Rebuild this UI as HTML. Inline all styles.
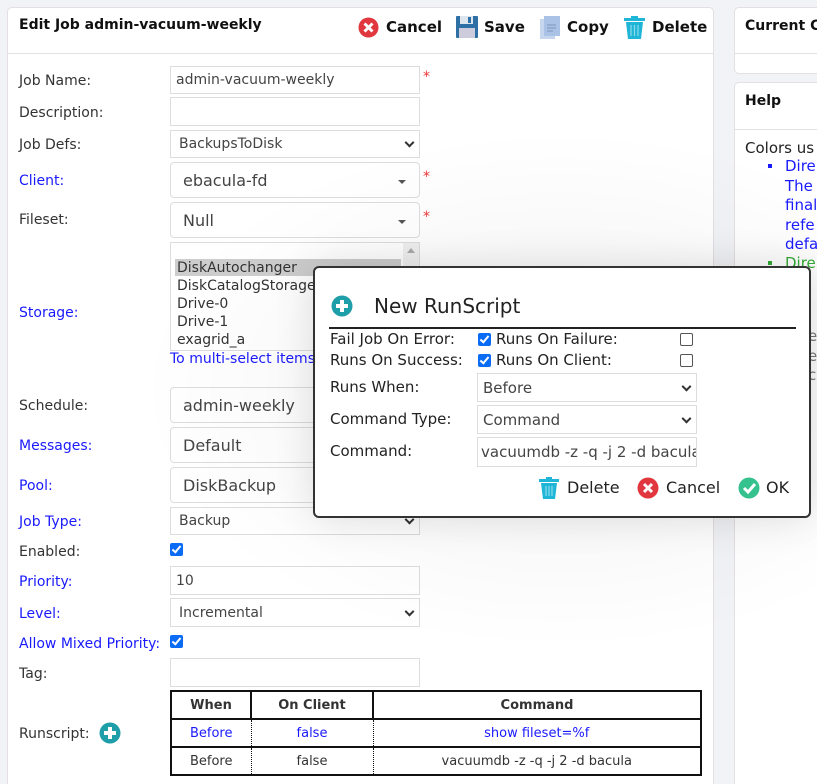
<!DOCTYPE html>
<html style="overflow:hidden"><head><meta charset="utf-8"><style>
*{box-sizing:border-box}
body{margin:0;width:817px;height:784px;background:#f2f3f6;font-family:"DejaVu Sans",Verdana,sans-serif;font-size:14px;color:#333;position:relative;overflow:hidden}
.a{position:absolute}
.panel{position:absolute;background:#fff;border:1px solid #e3dfe2;border-radius:5px}
.lbl{position:absolute;left:19px;font-size:14px;color:#333;white-space:nowrap}
.blue{color:#1a1aff}
.inp{position:absolute;left:170px;width:250px;border:1px solid #ddd;background:#fff;font-size:14px;padding-left:5px;display:flex;align-items:center;color:#444}
.rnd{border-radius:4px;font-size:16px;padding-left:12px}
.chev{position:absolute;right:6px;top:50%;width:7px;height:7px;border-right:2px solid #333;border-bottom:2px solid #333;transform:translateY(-70%) rotate(45deg)}
.tri{position:absolute;right:13px;top:50%;border:4px solid transparent;border-top:4px solid #555;border-bottom:0}
.star{position:absolute;left:423px;color:#e33;font-size:14px}
.cb{position:absolute;width:13px;height:13px;border-radius:2px;background:#0a6cf5}
.cb:after{content:"";position:absolute;left:4px;top:1px;width:3px;height:7px;border-right:2px solid #fff;border-bottom:2px solid #fff;transform:rotate(40deg)}
.ecb{position:absolute;width:13px;height:13px;border:1px solid #555;border-radius:2px;background:#fff}
table{border-collapse:collapse;font-size:13px}
td,th{text-align:center;height:28px;padding:0}
</style></head><body>

<div class="panel" style="left:7px;top:7px;width:707px;height:790px">
 <div class="a" style="left:0;top:45px;width:705px;border-top:1px solid #e3dfe2"></div>
</div>
<div class="a" style="left:19px;top:17px;font-weight:bold;font-size:14px;color:#111">Edit Job admin-vacuum-weekly</div>

<svg class="a" style="left:358px;top:17px" width="21" height="21"><circle cx="10.5" cy="10.5" r="10" fill="#e0383e"/><path d="M6.5 6.5l8 8M14.5 6.5l-8 8" stroke="#fff" stroke-width="3"/></svg>
<div class="a" style="left:386px;top:18px;font-weight:bold;font-size:15px;color:#111">Cancel</div>
<svg class="a" style="left:456px;top:16px" width="22" height="22"><rect x="0" y="0" width="22" height="22" rx="1" fill="#2e6fa6"/><rect x="4" y="0" width="13" height="8" fill="#dde6ee"/><rect x="12" y="1" width="3" height="6" fill="#2e6fa6"/><rect x="3" y="12" width="16" height="10" fill="#ccd"/></svg>
<div class="a" style="left:484px;top:18px;font-weight:bold;font-size:15px;color:#111">Save</div>
<svg class="a" style="left:540px;top:16px" width="20" height="23"><rect x="0" y="3" width="15" height="20" fill="#c5d6ee"/><rect x="4" y="0" width="16" height="20" fill="#a9c2e6"/><path d="M7 9h9M7 12h9M7 15h6" stroke="#7f95b5"/></svg>
<div class="a" style="left:567px;top:18px;font-weight:bold;font-size:15px;color:#111">Copy</div>
<svg class="a" style="left:624px;top:16px" width="21" height="23"><rect x="0" y="2" width="21" height="3" fill="#1fb5d6"/><rect x="7" y="0" width="7" height="3" fill="#1fb5d6"/><path d="M2 6h17l-2 17H4z" fill="#1fb5d6"/><path d="M7 9v11M10.5 9v11M14 9v11" stroke="#8ddced" stroke-width="1.2"/></svg>
<div class="a" style="left:652px;top:18px;font-weight:bold;font-size:15px;color:#111">Delete</div>

<div class="lbl" style="top:73px">Job Name:</div>
<div class="inp" style="top:66px;height:28px">admin-vacuum-weekly</div><div class="star" style="top:69px">*</div>
<div class="lbl" style="top:105px">Description:</div>
<div class="inp" style="top:97px;height:29px"></div>
<div class="lbl" style="top:137px">Job Defs:</div>
<div class="inp" style="top:130px;height:28px;padding-left:8px">BackupsToDisk<span class="chev"></span></div>
<div class="lbl blue" style="top:173px">Client:</div>
<div class="inp rnd" style="top:162px;height:36px">ebacula-fd<span class="tri"></span></div><div class="star" style="top:169px">*</div>
<div class="lbl" style="top:212px">Fileset:</div>
<div class="inp rnd" style="top:202px;height:36px">Null<span class="tri"></span></div><div class="star" style="top:209px">*</div>
<div class="lbl blue" style="top:305px">Storage:</div>
<div class="inp" style="top:242px;height:109px;display:block;padding:0;color:#333">
 <div class="a" style="right:0;top:0;width:16px;height:107px;background:#f0f0f0"></div>
 <div class="a" style="right:4px;top:5px;border:4px solid transparent;border-bottom:5px solid #aaa;border-top:0"></div>
 <div class="a" style="left:4px;top:16px;width:226px;height:17px;background:#cdcdcd"></div>
 <div class="a" style="left:6px;top:16px;line-height:18px">DiskAutochanger<br>DiskCatalogStorage<br>Drive-0<br>Drive-1<br>exagrid_a</div>
</div>
<div class="a blue" style="left:170px;top:351px">To multi-select items</div>
<div class="lbl" style="top:398px">Schedule:</div>
<div class="inp rnd" style="top:387px;height:36px">admin-weekly</div>
<div class="lbl blue" style="top:438px">Messages:</div>
<div class="inp rnd" style="top:427px;height:36px">Default</div>
<div class="lbl blue" style="top:478px">Pool:</div>
<div class="inp rnd" style="top:467px;height:36px">DiskBackup</div>
<div class="lbl blue" style="top:514px">Job Type:</div>
<div class="inp" style="top:507px;height:28px;padding-left:8px">Backup<span class="chev"></span></div>
<div class="lbl" style="top:544px">Enabled:</div>
<div class="cb" style="left:170px;top:543px"></div>
<div class="lbl blue" style="top:574px">Priority:</div>
<div class="inp" style="top:566px;height:29px">10</div>
<div class="lbl blue" style="top:606px">Level:</div>
<div class="inp" style="top:598px;height:29px;padding-left:8px">Incremental<span class="chev"></span></div>
<div class="lbl blue" style="top:636px">Allow Mixed Priority:</div>
<div class="cb" style="left:170px;top:635px"></div>
<div class="lbl" style="top:666px">Tag:</div>
<div class="inp" style="top:658px;height:29px"></div>
<div class="lbl" style="top:726px">Runscript:</div>
<svg class="a" style="left:99px;top:722px" width="22" height="22"><circle cx="11" cy="11" r="10.5" fill="#1e9ea8"/><path d="M11 5v12M5 11h12" stroke="#fff" stroke-width="4"/></svg>

<table class="a" style="left:170px;top:690px;width:532px;border:2px solid #111">
<tr style="border-bottom:2px solid #111"><th style="width:80px;border-right:2px solid #111">When</th><th style="width:122px;border-right:2px solid #111">On Client</th><th>Command</th></tr>
<tr style="border-bottom:2px solid #111;color:#1a1aff"><td style="border-right:1px dotted #111">Before</td><td style="border-right:1px dotted #111">false</td><td>show fileset=%f</td></tr>
<tr><td style="border-right:1px dotted #111">Before</td><td style="border-right:1px dotted #111">false</td><td>vacuumdb -z -q -j 2 -d bacula</td></tr>
</table>

<div class="panel" style="left:734px;top:7px;width:100px;height:67px;overflow:hidden"><div class="a" style="left:0;top:45px;width:100px;border-top:1px solid #e3dfe2"></div></div>
<div class="a" style="left:745px;top:18px;font-weight:bold;color:#111;white-space:nowrap">Current C</div>
<div class="panel" style="left:734px;top:82px;width:100px;height:720px"><div class="a" style="left:0;top:46px;width:100px;border-top:1px solid #e3dfe2"></div></div>
<div class="a" style="left:745px;top:93px;font-weight:bold;color:#111">Help</div>
<div class="a" style="left:745px;top:139px;font-size:15px;color:#222;white-space:nowrap">Colors us</div>
<div class="a" style="left:768px;top:164px;width:4px;height:4px;background:#1a1aff"></div>
<div class="a blue" style="left:785px;top:157px;font-size:15px;line-height:19.5px">Dire<br>The<br>final<br>refe<br>defa</div>
<div class="a" style="left:768px;top:261px;width:4px;height:4px;background:#3a3"></div>
<div class="a" style="left:785px;top:254px;font-size:15px;line-height:19.5px;color:#3a3">Dire<br>c<br>i</div>
<div class="a" style="left:808px;top:327px;font-size:15px;line-height:19.5px;color:#777">e<br>e<br>c</div>

<div class="a" style="left:0;top:0;width:817px;height:784px;background:radial-gradient(ellipse 420px 260px at 560px 390px,rgba(0,0,0,0.06),rgba(0,0,0,0) 100%)"></div>

<div class="a" style="left:313px;top:266px;width:498px;height:252px;background:#fff;border:2px solid #333;border-radius:6px;box-shadow:0 0 40px rgba(0,0,0,0.12);font-size:15px;color:#222">
 <svg class="a" style="left:16px;top:27px" width="22" height="22"><circle cx="11" cy="11" r="10.5" fill="#1e9ea8"/><path d="M11 5v12M5 11h12" stroke="#fff" stroke-width="4"/></svg>
 <div class="a" style="left:59px;top:26px;font-size:20px;color:#222">New RunScript</div>
 <div class="a" style="left:14px;top:59px;width:467px;border-top:2px solid #222"></div>
 <div class="a" style="left:15px;top:62px;white-space:nowrap">Fail Job On Error:</div>
 <div class="cb" style="left:163px;top:65px"></div>
 <div class="a" style="left:181px;top:62px">Runs On Failure:</div>
 <div class="ecb" style="left:365px;top:65px"></div>
 <div class="a" style="left:15px;top:83px;white-space:nowrap">Runs On Success:</div>
 <div class="cb" style="left:163px;top:86px"></div>
 <div class="a" style="left:181px;top:83px">Runs On Client:</div>
 <div class="ecb" style="left:365px;top:86px"></div>
 <div class="a" style="left:15px;top:110px">Runs When:</div>
 <div class="inp" style="left:162px;top:105px;width:220px;height:29px;font-size:15px">Before<span class="chev"></span></div>
 <div class="a" style="left:15px;top:142px">Command Type:</div>
 <div class="inp" style="left:162px;top:137px;width:220px;height:29px;font-size:15px">Command<span class="chev"></span></div>
 <div class="a" style="left:15px;top:174px">Command:</div>
 <div class="inp" style="left:162px;top:169px;width:220px;height:30px;font-size:15px;padding-left:3px;overflow:hidden;white-space:nowrap">vacuumdb -z -q -j 2 -d bacula</div>
 <svg class="a" style="left:224px;top:209px" width="20" height="22"><rect x="0" y="2" width="20" height="3" fill="#1fb5d6"/><rect x="7" y="0" width="6" height="3" fill="#1fb5d6"/><path d="M2 6h16l-2 16H4z" fill="#1fb5d6"/><path d="M7 9v10M10 9v10M13 9v10" stroke="#8ddced" stroke-width="1.2"/></svg>
 <div class="a" style="left:252px;top:210px;font-size:16px">Delete</div>
 <svg class="a" style="left:322px;top:209px" width="22" height="22"><circle cx="11" cy="11" r="10.5" fill="#e0383e"/><path d="M7 7l8 8M15 7l-8 8" stroke="#fff" stroke-width="3"/></svg>
 <div class="a" style="left:351px;top:210px;font-size:16px">Cancel</div>
 <svg class="a" style="left:423px;top:209px" width="22" height="22"><circle cx="11" cy="11" r="10.5" fill="#35c28e"/><path d="M6 11l4 4 7-8" stroke="#fff" stroke-width="3" fill="none"/></svg>
 <div class="a" style="left:451px;top:210px;font-size:16px">OK</div>
</div>
</body></html>
